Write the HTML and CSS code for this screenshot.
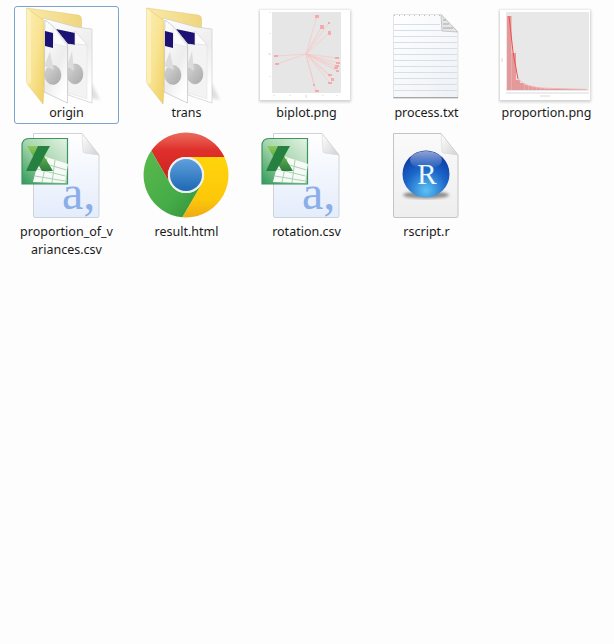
FILE: index.html
```html
<!DOCTYPE html>
<html lang="en">
<head>
<meta charset="utf-8">
<title>Folder</title>
<link rel="stylesheet" href="styles.css">
</head>
<body>
<svg class="defs" width="0" height="0" aria-hidden="true">
  <defs>
    <linearGradient id="folderFront" x1="0" y1="0" x2="1" y2="1">
      <stop offset="0" stop-color="#fbeeb4"/><stop offset="0.5" stop-color="#f8e493"/><stop offset="1" stop-color="#f0cf63"/>
    </linearGradient>
    <linearGradient id="folderBack" x1="0" y1="0" x2="1" y2="0">
      <stop offset="0" stop-color="#f9e9a8"/><stop offset="1" stop-color="#efd67f"/>
    </linearGradient>
    <linearGradient id="sheet" x1="0" y1="0" x2="0.6" y2="1">
      <stop offset="0" stop-color="#ffffff"/><stop offset="0.65" stop-color="#ededed"/><stop offset="1" stop-color="#ffffff"/>
    </linearGradient>
    <linearGradient id="pie" x1="0" y1="0" x2="1" y2="1">
      <stop offset="0" stop-color="#d6d6d6"/><stop offset="1" stop-color="#a8a8a8"/>
    </linearGradient>
    <linearGradient id="pageBlue" x1="0" y1="0" x2="0" y2="1">
      <stop offset="0" stop-color="#ffffff"/><stop offset="1" stop-color="#e4ecfb"/>
    </linearGradient>
    <linearGradient id="xlBox" x1="1" y1="0" x2="0" y2="1">
      <stop offset="0" stop-color="#e4f2e4"/><stop offset="0.5" stop-color="#a7d5ad"/><stop offset="1" stop-color="#2f9a58"/>
    </linearGradient>
    <linearGradient id="xlArm" x1="0" y1="0" x2="0" y2="1">
      <stop offset="0" stop-color="#8ccb5a"/><stop offset="1" stop-color="#2a8040"/>
    </linearGradient>
    <linearGradient id="fold" x1="0" y1="0" x2="1" y2="1">
      <stop offset="0" stop-color="#ffffff"/><stop offset="1" stop-color="#d2d2d2"/>
    </linearGradient>
    <linearGradient id="txtPage" x1="0" y1="0" x2="1" y2="1">
      <stop offset="0" stop-color="#ffffff"/><stop offset="1" stop-color="#eef1f5"/>
    </linearGradient>
    <filter id="soft" x="-20%" y="-20%" width="140%" height="140%"><feGaussianBlur stdDeviation="1.6"/></filter>
    <filter id="thumb" x="-5%" y="-5%" width="110%" height="110%"><feGaussianBlur stdDeviation="0.35"/></filter>

    <symbol id="folder" viewBox="18 7 97 97">
      <path class="shade-light" d="M72 94 L100 100 L92 84 Z" filter="url(#soft)"/>
      <path d="M27 8 L78 15 Q81.500 15.500 81.500 19 L81.500 30 L40 60 Z" fill="url(#folderBack)" stroke="#e4c970" stroke-width="0.5"/>
      <path d="M43 18 L76 27 L92 29 L92 103 L68 95 L43 86 Z" fill="url(#sheet)" stroke="#c6c6c6" stroke-width="0.6"/>
      <path d="M56 29 L75 33 L75 45 L68 44 Z" fill="#1c1273"/>
      <path d="M75 31 L87 44 L87 99 L68 93 L68 44 L75 45 Z" fill="#f3f3f3" stroke="#d8d8d8" stroke-width="0.4"/>
      <path d="M75 31 L75 44 L87 45 Z" fill="#fdfdfd" stroke="#d0d0d0" stroke-width="0.4"/>
      <ellipse cx="75" cy="74" rx="8" ry="10" fill="url(#pie)" stroke="#a0a0a0" stroke-width="0.4"/>
      <path d="M72 51 L67 66 L74 71 Z" fill="#dcdcdc"/>
      <path d="M45 20 L53 26 L67.500 44 L67.500 103 L44 92 Z" fill="url(#sheet)" stroke="#b9b9b9" stroke-width="0.6"/>
      <path d="M45 31 L53 33 L53 48 L45 46 Z" fill="#1c1273"/>
      <path d="M53 26 L54 44 L67.500 47 Z" fill="#fbfbfb" stroke="#d4d4d4" stroke-width="0.4"/>
      <ellipse cx="53" cy="75" rx="8" ry="9.500" fill="url(#pie)" stroke="#a0a0a0" stroke-width="0.4"/>
      <path d="M50 52 L44 66 L54 70 Z" fill="#dcdcdc"/>
      <path d="M26.500 8 L44 20.500 L44 75 Q44 95 43 104 L28 85 Q26.500 83 26.500 79 Z" fill="url(#folderFront)" stroke="#e2c568" stroke-width="0.5"/>
      <path d="M26.500 8 L31 11.500 L31 82 L28 85 Q26.500 83 26.500 79 Z" fill="#fdf3c6" opacity="0.65"/>
    </symbol>

    <symbol id="excel" viewBox="18 126 97 97">
      <path d="M33.500 133.500 L82 133.500 L99 155 L99 216 Q99 217.500 97 217.500 L35 217.500 Q33.500 217.500 33.500 216 Z" fill="url(#pageBlue)" stroke="#cfd3d9" stroke-width="1"/>
      <path d="M82 133.500 L83 151 Q83 153 85 153 L99 155 Z" fill="url(#fold)" stroke="#cfcfcf" stroke-width="0.5"/>
      <text class="glyph-a" x="62" y="209">a,</text>
      <path d="M29 138.500 L67.500 138.500 L67.500 184 L22 184 L22 146 Q22 138.500 29 138.500 Z" fill="url(#xlBox)" stroke="#3c9660" stroke-width="1.200"/>
      <path d="M40 155 L68 164 L65 183 L33 182 Z" fill="#f7faf6"/>
      <path d="M39 162 L66.500 170 M37 169 L65.500 176 M35 176 L65 181 M47 158 L42 182 M55 160 L52 183" stroke="#a6d3af" stroke-width="1" fill="none"/>
      <path d="M27 146 L38 146 L53 171 L42 171 Z" fill="url(#xlArm)"/>
      <path d="M38 146 L50 146 L36 171 L26 171 Z" fill="#26803f"/>
    </symbol>
  </defs>
</svg>

<main class="grid">
  <figure class="tile tile-selected">
    <svg class="icon"><use href="#folder"/></svg>
    <figcaption class="label">origin</figcaption>
  </figure>
  <figure class="tile">
    <svg class="icon"><use href="#folder"/></svg>
    <figcaption class="label">trans</figcaption>
  </figure>
  <figure class="tile">
    <svg class="icon" viewBox="258 7 97 97">
      <rect class="shade" x="259" y="10" width="92" height="92" filter="url(#soft)"/>
      <rect x="260" y="10" width="90" height="90" fill="#fff"/>
      <g filter="url(#thumb)">
        <rect x="272" y="12" width="69" height="81" fill="#e6e6e6"/>
        <g class="rays">
          <path d="M306 54L317 16M306 54L322 26M306 54L329 23M306 54L329 33M306 54L276 56M306 54L277 64M306 54L337 58M306 54L338 63M306 54L337 66M306 54L336 68M306 54L337 71M306 54L330 75M306 54L332 79M306 54L330 83M306 54L314 85M306 54L316 91"/>
        </g>
        <g class="blobs">
          <rect x="315" y="15" width="4" height="3"/><rect x="320" y="25" width="4" height="4"/><rect x="328" y="22" width="2" height="2"/><rect x="328" y="31" width="3" height="4"/>
          <rect x="274" y="55" width="4" height="2"/><rect x="275" y="63" width="4" height="2"/><rect x="335" y="57" width="4" height="2"/><rect x="336" y="62" width="4" height="2"/>
          <rect x="335" y="65" width="4" height="2"/><rect x="334" y="67" width="4" height="2"/><rect x="336" y="70" width="3" height="2"/><rect x="328" y="74" width="4" height="2"/>
          <rect x="331" y="78" width="3" height="3"/><rect x="328" y="82" width="4" height="2"/><rect x="313" y="84" width="2" height="2"/><rect x="315" y="90" width="4" height="2"/>
        </g>
        <path class="ticks" d="M268 54H271M270 12V13M270 33V34M270 76V77M274 95V96M290 95V96M306 95V98M323 95V96M337 95V96"/>
      </g>
    </svg>
    <figcaption class="label">biplot.png</figcaption>
  </figure>
  <figure class="tile">
    <svg class="icon" viewBox="378 7 97 97">
      <path d="M393.500 14.500 L441 14.500 L458 32 L458 98 L393.500 98 Z" fill="url(#txtPage)" stroke="#dcdcdc" stroke-width="0.8"/>
      <path class="ruled" d="M394 24.500H440M394 30.500H457M394 36.500H457M394 42.500H457M394 48.500H457M394 54.500H457M394 60.500H457M394 66.500H457M394 72.500H457M394 78.500H457M394 84.500H457M394 90.500H457"/>
      <path d="M394 15.500 H441" stroke="#bdbdbd" stroke-width="1.200" stroke-dasharray="1 4" fill="none"/>
      <path d="M441 14.500 L442 31 L458 32 Z" fill="#e4e6e8" stroke="#b4b6b8" stroke-width="0.7"/>
      <path d="M443 20H446M443 24H449M443 28H453" stroke="#9a9a9a" stroke-width="0.8"/>
      <path d="M393.500 97.600 H458" stroke="#a6a6a6" stroke-width="1.400"/>
    </svg>
    <figcaption class="label">process.txt</figcaption>
  </figure>
  <figure class="tile">
    <svg class="icon" viewBox="498 7 97 97">
      <rect class="shade" x="499" y="10" width="92" height="92" filter="url(#soft)"/>
      <rect x="500" y="10" width="90" height="90" fill="#fff"/>
      <g filter="url(#thumb)">
        <rect x="506" y="12" width="83" height="79" fill="#e8e8e8"/>
        <g class="bars">
          <rect x="507" y="16" width="4.500" height="74"/><rect x="511.500" y="53" width="4.500" height="37"/><rect x="516" y="80" width="4" height="10"/><rect x="520" y="83" width="4.500" height="7"/><rect x="524.500" y="85" width="4" height="5"/><rect x="528.500" y="86" width="4" height="4"/><rect x="532.500" y="87" width="4" height="3"/><rect x="536.500" y="87.500" width="4" height="2.500"/><rect x="540.500" y="88" width="4" height="2"/><rect x="544.500" y="88.500" width="4" height="1.500"/><rect x="548.500" y="89" width="38" height="1"/>
        </g>
        <path d="M509 16 L513 52 L518 79" fill="none" stroke="#ee4e4e" stroke-width="1"/>
        <path d="M518 79 L524 84 L530 86 L540 88 L586 89.500" fill="none" stroke="#f4b4b4" stroke-width="1"/>
        <path class="ticks" d="M506 93H589M540 96H550M502 58V62"/>
      </g>
    </svg>
    <figcaption class="label">proportion.png</figcaption>
  </figure>

  <figure class="tile">
    <svg class="icon"><use href="#excel"/></svg>
    <figcaption class="label">proportion_of_v<br>ariances.csv</figcaption>
  </figure>
  <figure class="tile">
    <svg class="icon" viewBox="138 125 97 97">
      <defs>
        <linearGradient id="cRed" x1="0" y1="0" x2="0" y2="1"><stop offset="0" stop-color="#ea6c5c"/><stop offset="0.35" stop-color="#df2f2a"/><stop offset="1" stop-color="#c9221f"/></linearGradient>
        <linearGradient id="cYellow" x1="0" y1="0" x2="0" y2="1"><stop offset="0" stop-color="#ffd40c"/><stop offset="0.7" stop-color="#fdc70a"/><stop offset="1" stop-color="#eeab12"/></linearGradient>
        <linearGradient id="cGreen" x1="0" y1="0" x2="1" y2="1"><stop offset="0" stop-color="#5ab94b"/><stop offset="0.6" stop-color="#46ac48"/><stop offset="1" stop-color="#2f8f3b"/></linearGradient>
        <linearGradient id="cBlue" x1="0" y1="0" x2="0" y2="1"><stop offset="0" stop-color="#5f9fdc"/><stop offset="1" stop-color="#1d69b3"/></linearGradient>
      </defs>
      <path d="M151.200 149.700 A42.500 42.500 0 0 1 224.500 156 L186 156 A18 18 0 0 0 170.400 183 Z" fill="url(#cRed)"/>
      <path d="M224.500 156 A42.500 42.500 0 0 1 182.300 216.300 L201.600 183 A18 18 0 0 0 186 156 Z" fill="url(#cYellow)"/>
      <path d="M182.300 216.300 A42.500 42.500 0 0 1 151.200 149.700 L170.400 183 A18 18 0 0 0 201.600 183 Z" fill="url(#cGreen)"/>
      <circle cx="186" cy="174" r="18" fill="#eef0ee"/>
      <circle cx="186" cy="174" r="16" fill="url(#cBlue)"/>
    </svg>
    <figcaption class="label">result.html</figcaption>
  </figure>
  <figure class="tile">
    <svg class="icon"><use href="#excel"/></svg>
    <figcaption class="label">rotation.csv</figcaption>
  </figure>
  <figure class="tile">
    <svg class="icon" viewBox="378 126 97 97">
      <defs>
        <linearGradient id="rPage" x1="0" y1="0" x2="0" y2="1"><stop offset="0" stop-color="#fafafa"/><stop offset="1" stop-color="#eeeeee"/></linearGradient>
        <radialGradient id="rBall" cx="0.5" cy="0.85" r="0.9"><stop offset="0" stop-color="#5cc2f3"/><stop offset="0.5" stop-color="#1b66c9"/><stop offset="1" stop-color="#0a2d9a"/></radialGradient>
        <linearGradient id="rGloss" x1="0" y1="0" x2="0" y2="1"><stop offset="0" stop-color="#fff" stop-opacity="0.55"/><stop offset="1" stop-color="#fff" stop-opacity="0"/></linearGradient>
      </defs>
      <path d="M393.500 133.500 L441 133.500 L458 155 L458 216 Q458 217.500 456 217.500 L395 217.500 Q393.500 217.500 393.500 216 Z" fill="url(#rPage)" stroke="#c4c4c4" stroke-width="1"/>
      <path d="M441 133.500 L442 151 Q442 153 444 153 L458 155 Z" fill="url(#fold)" stroke="#cfcfcf" stroke-width="0.5"/>
      <ellipse cx="426" cy="195" rx="23" ry="3.500" fill="#8a8a8a" filter="url(#soft)"/>
      <circle cx="426" cy="174" r="23.500" fill="url(#rBall)"/>
      <ellipse cx="426" cy="160" rx="16" ry="9" fill="url(#rGloss)"/>
      <text class="glyph-r" x="427" y="183.500">R</text>
    </svg>
    <figcaption class="label">rscript.r</figcaption>
  </figure>
</main>
</body>
</html>
```

FILE: styles.css
```css
html, body {
  margin: 0;
  height: 100%;
  background: #fdfdfd;
}

.defs {
  position: absolute;
}

.grid {
  display: grid;
  grid-template-columns: repeat(5, 105px);
  grid-template-rows: 118px auto;
  column-gap: 15px;
  row-gap: 1px;
  padding: 6px 0 0 14px;
}

.tile {
  margin: 0;
  box-sizing: border-box;
  height: 100%;
  display: flex;
  flex-direction: column;
  align-items: center;
  border: 1px solid transparent;
  border-radius: 3px;
}

.tile-selected {
  border-color: #7da2ce;
  background: #fefefe;
}

.icon {
  display: block;
  width: 97px;
  height: 97px;
  flex: none;
}

.label {
  font-family: "Noto Sans", "Open Sans", sans-serif;
  font-size: 12.5px;
  line-height: 18px;
  color: #1a1a1a;
  text-align: center;
  white-space: nowrap;
}

.shade {
  fill: #8a8a8a;
  opacity: 0.4;
}

.shade-light {
  fill: #9a9a9a;
  opacity: 0.3;
}

.rays path {
  fill: none;
  stroke: #f8c4c4;
  stroke-width: 0.7;
}

.blobs rect {
  fill: #f4aaaa;
}

.bars rect {
  fill: #e49a9a;
}

.ticks {
  fill: none;
  stroke: #cfcfcf;
  stroke-width: 0.8;
}

.ruled {
  fill: none;
  stroke: #d5dfeb;
  stroke-width: 1;
}

.glyph-a {
  font-family: "Liberation Serif", serif;
  font-size: 48px;
  fill: #8aaee8;
}

.glyph-r {
  font-family: "Liberation Serif", serif;
  font-size: 29px;
  fill: #eef6ff;
  text-anchor: middle;
}
```
